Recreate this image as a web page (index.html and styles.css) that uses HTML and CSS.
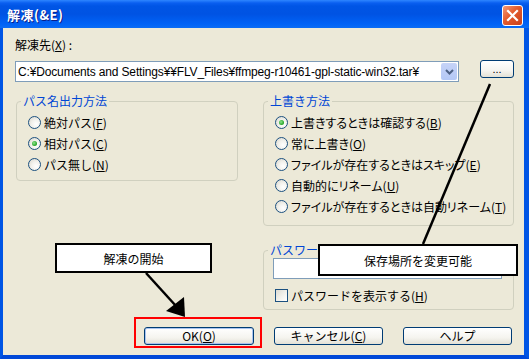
FILE: index.html
```html
<!DOCTYPE html>
<html lang="ja">
<head>
    <meta charset="UTF-8">
    <title>解凍(&amp;E)</title>
    <link rel="stylesheet" href="styles.css">
</head>
<body>
    <div class="window">
        <div class="titlebar">
            <span class="title">解凍(&amp;E)</span>
            <span class="close-btn">
                <svg width="13" height="13" viewBox="0 0 13 13">
                    <path d="M2 2 L11 11 M11 2 L2 11" stroke="#fff" stroke-width="2.2" stroke-linecap="square"/>
                </svg>
            </span>
        </div>

        <div class="client">
            <div class="label">解凍先(<u>X</u>) :</div>

            <div class="dest-row">
                <div class="combo">
                    <span class="combo-text">C:¥Documents and Settings¥¥FLV_Files¥ffmpeg-r10461-gpl-static-win32.tar¥</span>
                    <span class="combo-drop">
                        <svg width="9" height="6" viewBox="0 0 9 6">
                            <path d="M1 1 L4.5 4.5 L8 1" stroke="#4d6185" stroke-width="2" fill="none"/>
                        </svg>
                    </span>
                </div>
                <button class="btn btn-browse">...</button>
            </div>

            <div class="groups">
                <fieldset class="group group-path">
                    <legend>パス名出力方法</legend>
                    <div class="group-body">
                        <label class="option"><span class="radio"></span>絶対パス(<u>F</u>)</label>
                        <label class="option"><span class="radio checked"></span>相対パス(<u>C</u>)</label>
                        <label class="option"><span class="radio"></span>パス無し(<u>N</u>)</label>
                    </div>
                </fieldset>

                <div class="right-col">
                    <fieldset class="group group-overwrite">
                        <legend>上書き方法</legend>
                        <div class="group-body">
                            <label class="option"><span class="radio checked"></span>上書きするときは確認する(<u>B</u>)</label>
                            <label class="option"><span class="radio"></span>常に上書き(<u>O</u>)</label>
                            <label class="option"><span class="radio"></span>ファイルが存在するときはスキップ(<u>E</u>)</label>
                            <label class="option"><span class="radio"></span>自動的にリネーム(<u>U</u>)</label>
                            <label class="option"><span class="radio"></span>ファイルが存在するときは自動リネーム(<u>T</u>)</label>
                        </div>
                    </fieldset>

                    <fieldset class="group group-password">
                        <legend>パスワード(<u>P</u>)</legend>
                        <div class="password-body">
                            <div class="textbox"></div>
                            <label class="option check-option"><span class="checkbox"></span>パスワードを表示する(<u>H</u>)</label>
                        </div>
                    </fieldset>
                </div>
            </div>

            <div class="buttons">
                <button class="btn btn-ok">OK(<u>O</u>)</button>
                <button class="btn">キャンセル(<u>C</u>)</button>
                <button class="btn">ヘルプ</button>
            </div>
        </div>

        <!-- 注釈 -->
        <svg class="annotations" width="529" height="359" viewBox="0 0 529 359">
            <line x1="146" y1="273" x2="176" y2="306" stroke="#000" stroke-width="2.5"/>
            <polygon points="166,311 184,297 185,317" fill="#000"/>
            <line x1="490" y1="84" x2="423" y2="244" stroke="#000" stroke-width="2.5"/>
        </svg>
        <div class="highlight"></div>
        <div class="callout callout-start">解凍の開始</div>
        <div class="callout callout-dest">保存場所を変更可能</div>
    </div>
</body>
</html>
```

FILE: styles.css
```css
body {
    margin: 0;
    background-color: #ece9d8;
    font-family: "Noto Sans CJK JP", "DejaVu Sans", sans-serif;
    font-size: 12px;
    color: #000;
}
u {
    text-decoration: underline;
    text-underline-offset: 1px;
}
.window {
    position: relative;
    width: 529px;
    height: 359px;
    display: flex;
    flex-direction: column;
    overflow: hidden;
}
.titlebar {
    height: 28px;
    flex: none;
    display: flex;
    align-items: center;
    justify-content: space-between;
    padding: 0 6px 0 7px;
    background: linear-gradient(to bottom, #2e86ff 0, #0a5ff0 3px, #0055e5 6px, #0053e3 50%, #0062f6 85%, #0a6cf5 100%);
}
.title {
    color: #fff;
    font-weight: bold;
    font-size: 13px;
    letter-spacing: 0.5px;
    text-shadow: 1px 1px 0 #0a1e8a;
}
.close-btn {
    width: 19px;
    height: 19px;
    margin-top: 2px;
    border: 1px solid #fff;
    border-radius: 3px;
    background: linear-gradient(135deg, #f39a78 0, #e35a2c 45%, #c8401c 100%);
    display: flex;
    align-items: center;
    justify-content: center;
}
.client {
    flex: 1;
    border-left: 3px solid #0055e5;
    border-right: 5px solid #0055e5;
    border-bottom: 4px solid #0048d8;
    padding: 10px 10px 0 12px;
}
.label {
    line-height: 14px;
}
.dest-row {
    display: flex;
    justify-content: space-between;
    align-items: flex-start;
    margin-top: 9px;
}
.combo {
    width: 440px;
    height: 19px;
    border: 1px solid #7f9db9;
    background-color: #fff;
    display: flex;
    align-items: center;
    justify-content: space-between;
    padding-left: 2px;
}
.combo-text {
    font-family: "Liberation Sans", Arial, sans-serif;
    font-size: 12px;
    letter-spacing: -0.15px;
    white-space: nowrap;
}
.combo-drop {
    width: 16px;
    height: 17px;
    margin-right: 1px;
    border-radius: 2px;
    background: linear-gradient(to bottom, #c6d3f7, #b4c8f6);
    display: flex;
    align-items: center;
    justify-content: center;
}
.btn {
    font-family: "Noto Sans CJK JP", sans-serif;
    font-size: 12px;
    height: 18px;
    padding: 0;
    border: 1px solid #003c74;
    border-radius: 3px;
    background: linear-gradient(to bottom, #ffffff 0, #f5f4ef 60%, #e3e1d6 100%);
    color: #000;
    line-height: 14px;
}
.btn-browse {
    width: 34px;
    margin-top: -1px;
    font-family: "Liberation Sans", sans-serif;
    font-size: 11px;
    line-height: 10px;
}
.groups {
    display: flex;
    justify-content: space-between;
    align-items: flex-start;
    margin-top: 12px;
}
.group {
    margin: 0;
    padding: 0;
    min-width: 0;
    border: 1px solid #d0d0bf;
    border-radius: 4px;
}
.group legend {
    padding: 0 2px;
    margin-left: 4px;
    color: #0046d5;
    line-height: 14px;
}
.group-path {
    width: 222px;
    margin-left: 1px;
    box-sizing: border-box;
}
.group-body {
    display: flex;
    flex-direction: column;
    padding: 4px 0 5px 11px;
}
.group-overwrite .group-body {
    padding-bottom: 8px;
    font-feature-settings: "palt";
}
.option {
    height: 21px;
    display: flex;
    align-items: center;
    white-space: nowrap;
}
.radio {
    flex: none;
    width: 11px;
    height: 11px;
    margin-right: 3px;
    border: 1px solid #1c5180;
    border-radius: 50%;
    background: radial-gradient(circle at 65% 65%, #ffffff 0, #f2f1ec 45%, #d5d3c9 100%);
    display: flex;
    align-items: center;
    justify-content: center;
}
.radio.checked::after {
    content: "";
    width: 5px;
    height: 5px;
    border-radius: 50%;
    background: radial-gradient(circle at 40% 40%, #8ee58e, #21a121 70%);
}
.right-col {
    width: 251px;
    display: flex;
    flex-direction: column;
}
.group-overwrite,
.group-password {
    width: 251px;
    box-sizing: border-box;
}
.group-password {
    margin-top: 17px;
}
.password-body {
    padding: 1px 0 2px 9px;
}
.textbox {
    width: 227px;
    height: 19px;
    border: 1px solid #7f9db9;
    background-color: #fff;
}
.check-option {
    height: 24px;
    margin-top: 4px;
    padding-left: 2px;
}
.checkbox {
    flex: none;
    width: 11px;
    height: 11px;
    margin-right: 3px;
    border: 1px solid #1c5180;
    background: linear-gradient(135deg, #dcdbd3 0, #f4f3ee 60%, #ffffff 100%);
}
.buttons {
    display: flex;
    justify-content: flex-end;
    gap: 20px;
    margin-top: 17px;
    margin-right: 2px;
}
.buttons .btn {
    width: 109px;
}
.buttons .btn-ok {
    width: 110px;
    box-shadow: inset 0 0 0 1px #a9c4f0;
}
.annotations {
    position: absolute;
    left: 0;
    top: 0;
    pointer-events: none;
}
.highlight {
    position: absolute;
    left: 134px;
    top: 317px;
    width: 124px;
    height: 27px;
    border: 2px solid #ff0000;
}
.callout {
    position: absolute;
    background-color: #fff;
    border: 2px solid #000;
    display: flex;
    align-items: center;
    justify-content: center;
    font-size: 12px;
}
.callout-start {
    left: 55px;
    top: 243px;
    width: 153px;
    height: 26px;
}
.callout-dest {
    left: 318px;
    top: 244px;
    width: 196px;
    height: 28px;
}
```
